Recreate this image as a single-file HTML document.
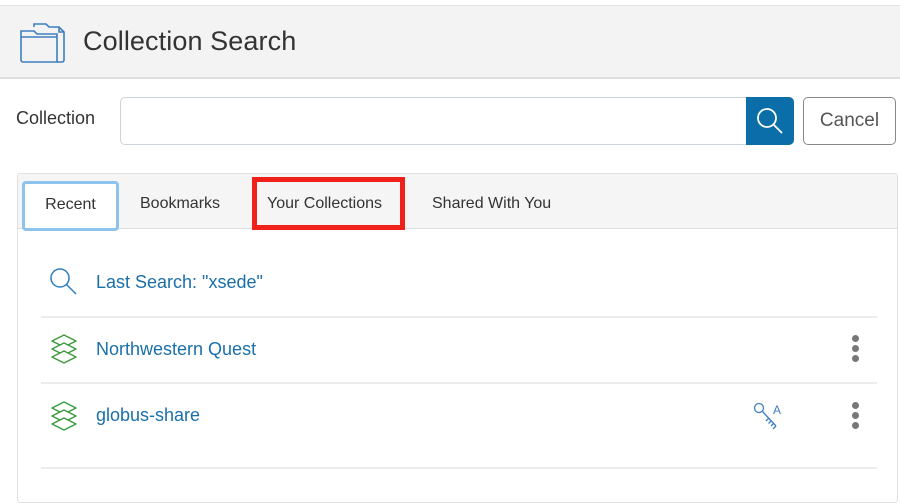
<!DOCTYPE html>
<html><head><meta charset="utf-8"><style>
*{box-sizing:border-box;margin:0;padding:0}
body{width:900px;height:484px;overflow:hidden;background:#fff;font-family:"Liberation Sans",sans-serif;position:relative;color:#333}
.hdr{position:absolute;left:0;top:5px;width:900px;height:74px;background:#f3f3f3;border-top:1px solid #e2e2e2;border-bottom:2px solid #ddd}
.hdr .t{position:absolute;left:83px;top:20px;font-size:27px;color:#333;letter-spacing:0.1px}
.lbl{position:absolute;left:16px;top:108px;font-size:18px;color:#333}
.inp{position:absolute;left:120px;top:97px;width:628px;height:48px;border:1px solid #ccd3dc;border-radius:5px 0 0 5px;border-right:none}
.sb{position:absolute;left:746px;top:97px;width:48px;height:48px;background:#0b6ea8;border-radius:0 5px 5px 0}
.cancel{position:absolute;left:803px;top:97px;width:93px;height:48px;border:1px solid #888;border-radius:5px;font-size:19px;color:#555;text-align:center;line-height:46px}
.panel{position:absolute;left:17px;top:173px;width:881px;height:330px;border:1px solid #e0e0e0;border-radius:3px}
.tabs{position:absolute;left:0;top:0;width:100%;height:55px;background:#f5f5f5;border-bottom:1px solid #ddd}
.tab{position:absolute;top:1px;font-size:16px;color:#333;line-height:58px}
.rec{position:absolute;left:4px;top:7px;width:97px;height:50px;background:#fff;border:3px solid #8ec3ee;border-radius:4px;text-align:center;line-height:42px;font-size:16px;color:#333}
.red{position:absolute;left:234px;top:3px;width:153px;height:53px;border:5px solid #f0201a}
.row{position:absolute;left:23px;width:836px;border-bottom:2px solid #ececec}
.lnk{position:absolute;left:78px;font-size:18px;color:#1a6fa8}
.dots{position:absolute;left:834px;width:8px}
.dots i{display:block;width:7px;height:7px;border-radius:50%;background:#777;margin-bottom:3px}
</style></head><body>
<div class="hdr">
<svg style="position:absolute;left:19px;top:15px" width="48" height="44" viewBox="0 0 48 44" fill="none" stroke="#3f7fbf" stroke-width="1.6"><path d="M15 6V3h12l3 3h10l5 5v28a2 2 0 0 1-2 2h-5"/><path d="M40 6v5h5"/><path d="M2 10h13l3 3h20v28H4a2 2 0 0 1-2-2z"/><path d="M2 16h36"/></svg>
<div class="t">Collection Search</div></div>
<div class="lbl">Collection</div>
<div class="inp"></div>
<div class="sb"><svg width="48" height="48" viewBox="0 0 48 48" fill="none" stroke="#fff" stroke-width="1.8"><circle cx="21" cy="21" r="9"/><path d="M27.5 27.5L36 36"/></svg></div>
<div class="cancel">Cancel</div>
<div class="panel">
<div class="tabs">
<div class="rec">Recent</div>
<div class="tab" style="left:122px">Bookmarks</div>
<div class="tab" style="left:249px">Your Collections</div>
<div class="tab" style="left:414px">Shared With You</div>
<div class="red"></div>
</div>
<div class="row" style="top:55px;height:89px"></div>
<div class="row" style="top:144px;height:66px"></div>
<div class="row" style="top:210px;height:85px"></div>
<svg style="position:absolute;left:30px;top:92px" width="32" height="32" viewBox="0 0 32 32" fill="none" stroke="#2c7fc0" stroke-width="1.5"><circle cx="12" cy="12" r="9"/><path d="M18.5 18.5L28 28"/></svg>
<div class="lnk" style="top:165px;left:78px;top:98px">Last Search: "xsede"</div>
<svg style="position:absolute;left:32px;top:158px" width="28" height="36" viewBox="0 0 28 36" fill="none" stroke="#3a9a3a" stroke-width="1.4" stroke-linejoin="round"><path d="M14 3L26 9L14 15L2 9Z"/><path d="M14 11L26 17L14 23L2 17Z" fill="#fff"/><path d="M14 19L26 25L14 31L2 25Z" fill="#fff"/></svg>
<div class="lnk" style="top:165px">Northwestern Quest</div>
<div class="dots" style="top:161px"><i></i><i></i><i></i></div>
<svg style="position:absolute;left:32px;top:225px" width="28" height="36" viewBox="0 0 28 36" fill="none" stroke="#3a9a3a" stroke-width="1.4" stroke-linejoin="round"><path d="M14 3L26 9L14 15L2 9Z"/><path d="M14 11L26 17L14 23L2 17Z" fill="#fff"/><path d="M14 19L26 25L14 31L2 25Z" fill="#fff"/></svg>
<div class="lnk" style="top:231px">globus-share</div>
<svg style="position:absolute;left:734px;top:226px" width="34" height="32" viewBox="0 0 34 32" fill="none" stroke="#3f7fbf" stroke-width="1.3"><circle cx="7" cy="8" r="4.5"/><path d="M10.5 11.5L24 26M17 18l-3 3M19.5 20.5l-3 3M22 23l-3 3M24 26l-3 3"/><text x="21" y="14" font-size="12" fill="#3f7fbf" stroke="none" font-family="Liberation Sans">A</text></svg>
<div class="dots" style="top:228px"><i></i><i></i><i></i></div>
</div>
</body></html>
